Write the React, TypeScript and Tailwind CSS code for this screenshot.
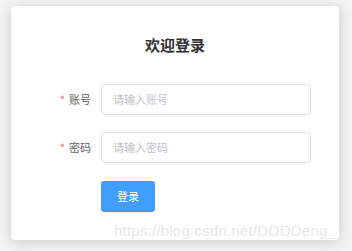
import React from "react";

const cjk = { fontFamily: '"Noto Sans CJK SC", "Noto Sans", sans-serif' };

export default function App() {
  return (
    <div className="relative w-[352px] h-[251px] overflow-hidden bg-[#f4f4f4]" style={cjk}>
      <div className="pt-[6px] pl-[11px]">
        <div className="w-[328px] h-[234px] rounded-[4px] bg-white shadow-[0_2px_14px_rgba(0,0,0,0.18)] flex flex-col">
          <div className="mt-[28px] h-[22px] flex items-center justify-center text-[15px] font-bold text-[#303133] leading-[22px]">
            欢迎登录
          </div>
          <div className="mt-[28px] flex flex-col">
            <div className="flex items-center h-[31px]">
              <div className="w-[80px] text-right text-[11px] text-[#606266] leading-[31px]">
                <span className="text-[#f56c6c] mr-[4px]">*</span>账号
              </div>
              <div className="ml-[10px] w-[210px] h-[31px] border border-[#dcdfe6] rounded-[4px] flex items-center pl-[11px] text-[11px] text-[#c0c4cc]">
                请输入账号
              </div>
            </div>
            <div className="mt-[17px] flex items-center h-[31px]">
              <div className="w-[80px] text-right text-[11px] text-[#606266] leading-[31px]">
                <span className="text-[#f56c6c] mr-[4px]">*</span>密码
              </div>
              <div className="ml-[10px] w-[210px] h-[31px] border border-[#dcdfe6] rounded-[4px] flex items-center pl-[11px] text-[11px] text-[#c0c4cc]">
                请输入密码
              </div>
            </div>
            <div className="mt-[18px] pl-[90px]">
              <div className="w-[54px] h-[31px] rounded-[3px] bg-[#409eff] text-white text-[11px] flex items-center justify-center">
                登录
              </div>
            </div>
          </div>
        </div>
      </div>
      <div
        className="absolute left-[114px] top-[221px] text-[15.5px] leading-[20px] text-[#e8e8e8] whitespace-nowrap"
        style={{ fontFamily: '"Liberation Sans", Arial, sans-serif' }}
      >
        https://blog.csdn.net/DDDDeng_
      </div>
    </div>
  );
}
